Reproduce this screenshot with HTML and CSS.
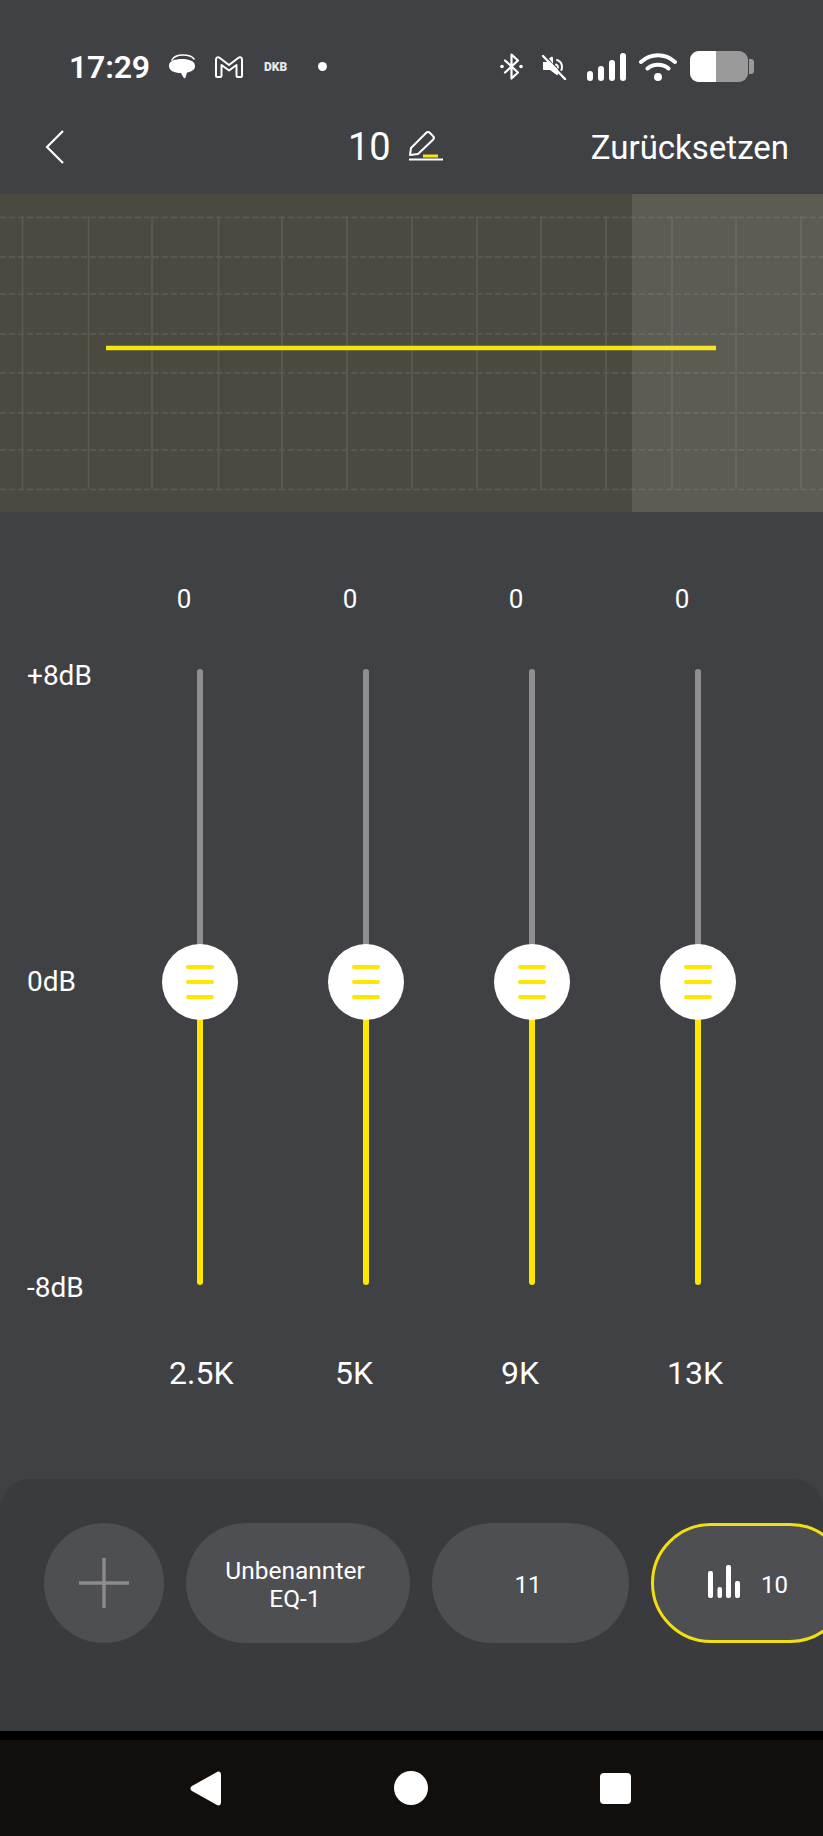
FILE: index.html
```html
<!DOCTYPE html>
<html lang="de">
<head>
<meta charset="utf-8">
<title>Equalizer</title>
<link rel="stylesheet" href="styles.css">
</head>
<body>
<div class="screen">
  <div class="status">
    <span class="time">17:29</span>
    <svg class="ic-msg" width="28" height="25" viewBox="0 0 28 25"><path d="M4 6C6 2 10 1 15 1c5 0 9 1 11 4" fill="none" stroke="#fff" stroke-width="1.6" stroke-linecap="round"/><path d="M14 5c7 0 13 2 13 7 0 4-4 6-8 6.500l-1.500 5c-.3 1-1.500 1-2 0L13 19C6 19 1 17 1 11.500 1 7 7 5 14 5z" fill="#fff"/></svg>
    <svg class="ic-m" width="30" height="24" viewBox="0 0 30 24"><path d="M2 21V4.500C2 2.500 4 1.500 5.500 2.700L15 10l9.500-7.300C26 1.500 28 2.500 28 4.500V21c0 .6-.4 1-1 1h-3.500c-.6 0-1-.4-1-1V10L15 15.500 7.500 10v11c0 .6-.4 1-1 1H3c-.6 0-1-.4-1-1z" fill="none" stroke="#fff" stroke-width="2" stroke-linejoin="round"/></svg>
    <span class="dkb">DKB</span>
    <span class="dot"></span>
    <svg class="ic-bt" width="23" height="27" viewBox="0 0 23 27"><path d="M5 7.500l13 12-6.500 6V1.500l6.500 6-13 12" fill="none" stroke="#fff" stroke-width="2.200" stroke-linejoin="round" stroke-linecap="round"/><circle cx="2" cy="13.500" r="1.800" fill="#fff"/><circle cx="21" cy="13.500" r="1.800" fill="#fff"/></svg>
    <svg class="ic-mute" width="26" height="26" viewBox="0 0 26 26"><path d="M2 8h4l2-1.500 9 9V20c0 1-1 1.300-1.700.7L9 16H3c-.6 0-1-.4-1-1z" fill="#fff"/><path d="M8 4.500l2-1.500c.8-.6 2-.2 2 1v6z" fill="#fff"/><path d="M2 2l22 23" stroke="#fff" stroke-width="2.400" stroke-linecap="round"/><path d="M16 6c3 1 5 4 5 7 0 1-.2 2-.6 3M15 10.500c1.500.6 2 1.700 2 3" fill="none" stroke="#fff" stroke-width="2" stroke-linecap="round"/></svg>
    <svg class="ic-sig" width="39" height="28" viewBox="0 0 39 28"><rect x="0" y="18" width="6" height="10" rx="3" fill="#fff"/><rect x="11" y="13" width="6" height="15" rx="3" fill="#fff"/><rect x="22" y="7" width="6" height="21" rx="3" fill="#fff"/><rect x="33" y="0" width="6" height="28" rx="3" fill="#fff"/></svg>
    <svg class="ic-wifi" width="38" height="28" viewBox="0 0 38 28"><path d="M2 9c10-9 24-9 34 0M8.500 15.500c6-5 15-5 21 0" fill="none" stroke="#fff" stroke-width="4" stroke-linecap="round"/><circle cx="19" cy="24" r="4" fill="#fff"/></svg>
    <svg class="ic-bat" width="64" height="32" viewBox="0 0 64 32"><rect x="0" y="0" width="58" height="31" rx="9" fill="#9a9a9b"/><path d="M9 0h17v31H9c-5 0-9-4-9-9V9c0-5 4-9 9-9z" fill="#fff"/><path d="M59 8h2c1.500 0 3 1 3 3v9c0 2-1.500 3-3 3h-2z" fill="#9a9a9b"/></svg>
  </div>

  <div class="head">
    <svg class="back" width="20" height="34" viewBox="0 0 20 34"><path d="M18 1L2 17l16 16" fill="none" stroke="#fff" stroke-width="2.200"/></svg>
    <span class="title">10</span>
    <svg class="edit" width="36" height="30" viewBox="0 0 36 30"><path d="M2 24l1-7L18 2c1.200-1.200 3-1.200 4 0l3 3c1 1 1 2.700 0 3.700L10 23z" fill="none" stroke="#fff" stroke-width="2" stroke-linejoin="round"/><path d="M1 28.500h34" stroke="#fff" stroke-width="2"/><path d="M15 25h15" stroke="#ffe600" stroke-width="3"/></svg>
    <span class="reset">Zurücksetzen</span>
  </div>

  <div class="graph">
    <svg class="grid" width="823" height="318" viewBox="0 0 823 318">
      <g class="hlines">
        <path d="M0 23.500H823"/><path d="M0 63H823"/><path d="M0 100H823"/><path d="M0 140H823"/><path d="M0 179H823"/><path d="M0 219H823"/><path d="M0 256H823"/><path d="M0 295.500H823"/>
      </g>
      <g class="vlines">
        <path d="M22.500 22V295"/><path d="M88.500 22V295"/><path d="M152 22V295"/><path d="M218.500 22V295"/><path d="M282 22V295"/><path d="M347 22V295"/><path d="M412 22V295"/><path d="M477 22V295"/><path d="M541 22V295"/><path d="M606 22V295"/><path d="M672 22V295"/><path d="M736 22V295"/><path d="M801 22V295"/>
      </g>
      <path class="curve" d="M106 154H716"/>
    </svg>
    <div class="shade"></div>
  </div>

  <div class="eq">
    <div class="values">
      <span class="value">0</span><span class="value">0</span><span class="value">0</span><span class="value">0</span>
    </div>
    <div class="faders">
      <div class="scale"><span>+8dB</span><span>0dB</span><span>-8dB</span></div>
      <div class="fader"><div class="track-up"></div><div class="track-down"></div><div class="knob"><i></i><i></i><i></i></div></div>
      <div class="fader"><div class="track-up"></div><div class="track-down"></div><div class="knob"><i></i><i></i><i></i></div></div>
      <div class="fader"><div class="track-up"></div><div class="track-down"></div><div class="knob"><i></i><i></i><i></i></div></div>
      <div class="fader"><div class="track-up"></div><div class="track-down"></div><div class="knob"><i></i><i></i><i></i></div></div>
    </div>
    <div class="freqs">
      <span class="freq">2.5K</span><span class="freq">5K</span><span class="freq">9K</span><span class="freq">13K</span>
    </div>
  </div>

  <div class="sheet">
    <div class="add"><svg width="50" height="50" viewBox="0 0 50 50"><path d="M0 25H50M25 0V50" stroke="#8c8c8c" stroke-width="3.400" stroke-linecap="round"/></svg></div>
    <div class="pill pill-a">Unbenannter<br>EQ-1</div>
    <div class="pill pill-b">11</div>
    <div class="pill pill-c">
      <svg width="32" height="33" viewBox="0 0 32 33"><rect x="0" y="6" width="5" height="27" rx="2" fill="#fff"/><rect x="9.500" y="22" width="4.500" height="11" rx="2" fill="#fff"/><rect x="18" y="0" width="5" height="33" rx="2" fill="#fff"/><rect x="27" y="16" width="5" height="17" rx="2" fill="#fff"/></svg>
      <span>10</span>
    </div>
  </div>

  <div class="rule"></div>
  <div class="nav">
    <svg width="32" height="35" viewBox="0 0 32 35"><path d="M2 15L27 1c2-1 4 0 4 2.500v28c0 2.500-2 3.500-4 2.500L2 20c-2-1-2-4 0-5z" fill="#fff"/></svg>
    <span class="nav-home"></span>
    <span class="nav-recent"></span>
  </div>
</div>
</body>
</html>
```

FILE: styles.css
```css
* { box-sizing: border-box; }
html, body { margin: 0; padding: 0; }
body { background: #404145; font-family: Roboto, "Liberation Sans", sans-serif; color: #fff; }
.screen { width: 823px; height: 1836px; display: flex; flex-direction: column; overflow: hidden; background: #404145; }

.status { height: 100px; flex: none; display: flex; align-items: center; padding: 33px 0 0 69px; }
.status svg { flex: none; display: block; }
.time { font-size: 32px; font-weight: 600; width: 99px; letter-spacing: -0.2px; }
.ic-m { margin-left: 18px; }
.dkb { margin-left: 20px; width: 26px; font-size: 12px; font-weight: 900; color: #e8e8e8; }
.dot { margin-left: 28px; width: 9px; height: 9px; border-radius: 50%; background: #fff; }
.ic-bt { margin-left: 173px; }
.ic-mute { margin-left: 18px; }
.ic-sig { margin-left: 20px; }
.ic-wifi { margin-left: 13px; }
.ic-bat { margin-left: 13px; }

.head { height: 94px; flex: none; display: flex; align-items: center; padding: 0 34px 0 45px; }
.back { flex: none; }
.title { margin-left: 283px; font-size: 38px; font-weight: 400; width: 60px; }
.edit { flex: none; margin-bottom: 2px; }
.reset { margin-left: auto; font-size: 33px; font-weight: 400; }

.graph { position: relative; height: 318px; flex: none; background: #4b4a40; overflow: hidden; }
.grid { display: block; }
.hlines path { stroke: #5d5c53; stroke-width: 1.500; stroke-dasharray: 6 3; fill: none; }
.vlines path { stroke: #5c5b52; stroke-width: 1.500; fill: none; }
.curve { stroke: #f5e30c; stroke-width: 4.500; fill: none; }
.shade { position: absolute; top: 0; right: 0; bottom: 0; width: 191px; background: rgba(255, 255, 255, 0.1); }

.eq { flex: 1; display: flex; flex-direction: column; }
.values { display: flex; padding: 71px 0 0 101px; height: 157px; flex: none; }
.value { width: 166px; text-align: center; font-size: 26px; line-height: 32px; }
.faders { display: flex; height: 616px; flex: none; padding-left: 117px; position: relative; }
.scale { position: absolute; left: 27px; top: -9px; height: 644px; display: flex; flex-direction: column; justify-content: space-between; font-size: 28px; line-height: 32px; }
.fader { position: relative; flex: none; width: 166px; height: 616px; display: flex; flex-direction: column; align-items: center; }
.track-up { width: 6px; height: 313px; background: #8f8f90; border-radius: 3px 3px 0 0; }
.track-down { width: 6px; flex: 1; background: #ffe600; border-radius: 0 0 3px 3px; }
.knob { position: absolute; left: 45px; top: 275px; width: 76px; height: 76px; border-radius: 50%; background: #fff; display: flex; flex-direction: column; align-items: center; justify-content: center; gap: 11px; }
.knob i { display: block; width: 28px; height: 4px; border-radius: 2px; background: #ffe600; }
.freqs { display: flex; padding: 70px 0 0 169px; }
.freq { flex: none; width: 166px; font-size: 32px; line-height: 36px; }

.sheet { height: 252px; flex: none; background: #3a3b3e; border-radius: 30px 30px 0 0; display: flex; align-items: flex-start; padding: 44px 0 0 44px; gap: 22px; overflow: hidden; }
.add { flex: none; width: 120px; height: 120px; border-radius: 50%; background: #4e4f53; display: flex; align-items: center; justify-content: center; }
.add svg { display: block; }
.pill { flex: none; height: 120px; border-radius: 60px; background: #4e4f53; display: flex; align-items: center; justify-content: center; text-align: center; font-size: 24.500px; line-height: 28px; }
.pill-a { width: 224px; padding: 4px 6px 0 0; }
.pill-b { width: 197px; padding: 4px 5px 0 0; font-size: 24px; }
.pill-c { width: 199px; border: 3px solid #f2df10; justify-content: flex-start; padding-left: 54px; padding-top: 3px; gap: 21px; font-size: 24px; }
.pill-c svg { display: block; margin-top: -7px; }

.rule { height: 9px; flex: none; background: #000; }
.nav { height: 96px; flex: none; background: #110e0b; display: flex; align-items: center; justify-content: center; gap: 172px; padding-right: 3px; }
.nav svg { display: block; flex: none; }
.nav-home { width: 34px; height: 34px; border-radius: 50%; background: #fff; }
.nav-recent { width: 31px; height: 31px; border-radius: 4px; background: #fff; }
```
